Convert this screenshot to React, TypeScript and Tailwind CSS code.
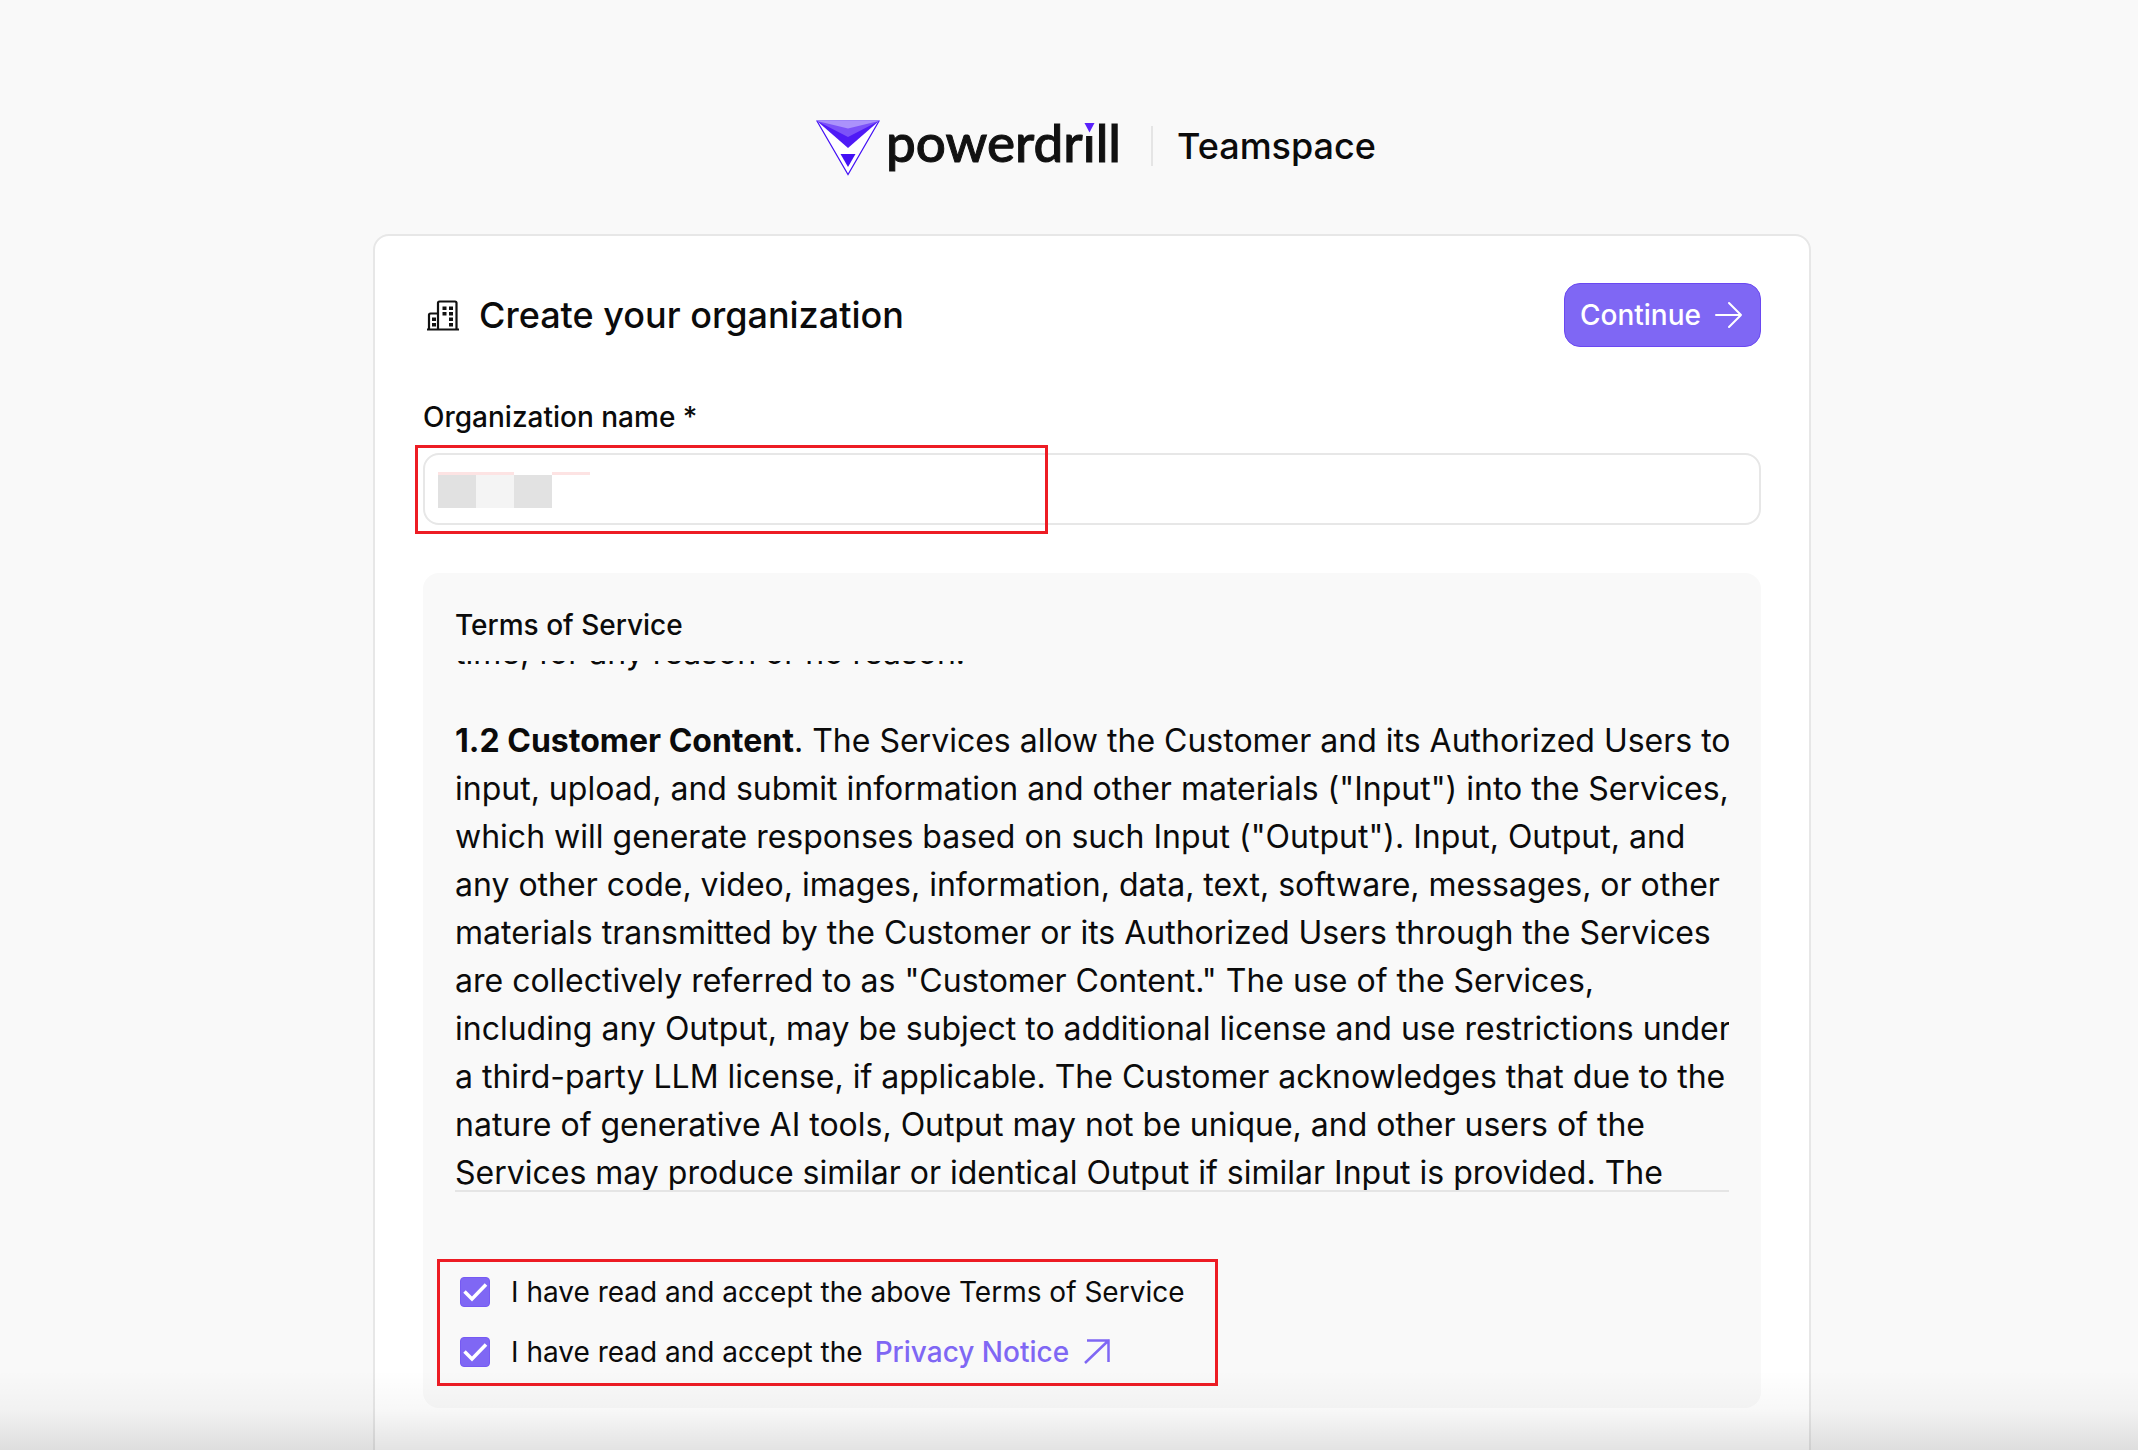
import React, { useEffect, useRef } from "react";

function LogoMark() {
  return (
    <svg className="mt-1 h-14 w-16 shrink-0" viewBox="0 0 64 56" aria-hidden="true">
      <path d="M1 1H63L32 54.5Z" fill="#fff" stroke="#4310f5" strokeWidth="1.2" />
      <path d="M1 1H63L32 28Z" fill="#4f1af6" />
      <path d="M1 1H63L32 17Z" fill="#7c52f8" />
      <path d="M1 1H63L32 8.5Z" fill="#ab92fb" />
      <path d="M24.5 34H39.5L32 47Z" fill="#4310f5" />
    </svg>
  );
}

function Wordmark() {
  return (
    <span className="mb-2 font-[Lato,sans-serif] text-[53px] leading-[56px] font-medium text-[#111] [-webkit-text-stroke:1px_#111]">
      powerdr
      <span className="relative">
        i
        <svg className="absolute top-3 left-0 h-[14px] w-[13px] bg-[#f9f9f9]" viewBox="0 0 13 14" aria-hidden="true">
          <path d="M1.500 1H11.500L6.500 10.500Z" fill="#5a22fb" />
        </svg>
      </span>
      ll
    </span>
  );
}

function BuildingIcon() {
  return (
    <svg className="size-9" viewBox="0 0 36 36" fill="none" stroke="#111" strokeWidth="2.2" aria-hidden="true">
      <path d="M2 32.500H34M4 32V18Q4 16.500 5.500 16.500H13M13 32V6Q13 4.500 14.500 4.500H30Q31.500 4.500 31.500 6V32" />
      <path fill="#111" stroke="none" d="M17.500 9.500h4v3.500h-4zM24 9.500h4v3.500h-4zM17.500 15h4v3.500h-4zM24 15h4v3.500h-4zM24 20.500h4v3.500h-4zM24 26h4v3.500h-4zM7 20.500h4v3.500h-4zM7 26h4v3.500h-4z" />
    </svg>
  );
}

function Consent({ id, children }: { id: string; children: React.ReactNode }) {
  return (
    <div className="flex h-[60px] items-center gap-[21px]">
      <span className="relative flex size-[30px]">
        <input id={id} type="checkbox" defaultChecked className="peer size-[30px] appearance-none rounded-sm border border-[#765af3] bg-[#7f67f4]" />
        <svg className="pointer-events-none absolute inset-0 hidden peer-checked:block" viewBox="0 0 30 30" fill="none" stroke="#fff" strokeWidth="3.5" aria-hidden="true">
          <path d="M4.500 14.500L12 22L26 7.500" />
        </svg>
      </span>
      {children}
    </div>
  );
}

export default function App() {
  const terms = useRef<HTMLDivElement>(null);
  useEffect(() => {
    if (terms.current) terms.current.scrollTop = 32;
  }, []);

  return (
    <div className="relative h-screen overflow-hidden bg-[#f9f9f9] pl-[46px] font-[Inter,sans-serif] text-[28px] leading-10 text-[#0b0b0b]">
      <header className="flex h-[174px] items-end justify-center pl-2">
        <div className="flex h-14 items-center gap-1.5">
          <LogoMark />
          <Wordmark />
          <span className="mr-[18px] ml-6 h-10 w-0.5 bg-[#e5e5e5]" />
          <span className="text-4xl font-medium">Teamspace</span>
        </div>
      </header>

      <main className="mx-auto mt-[60px] w-full max-w-[1438px] rounded-2xl border-2 border-[#e7e7e7] bg-white px-12 pt-[47px] pb-32">
        <div className="flex items-center justify-between">
          <h1 className="flex items-center gap-[18px] pl-0.5 text-4xl font-medium">
            <BuildingIcon />
            Create your organization
          </h1>
          <button type="button" className="flex h-16 items-center gap-3 rounded-2xl border border-[#6a48f1] bg-[#7f67f4] px-[15px] font-medium text-white">
            Continue
            <svg className="size-8" viewBox="0 0 32 32" fill="none" stroke="currentColor" strokeWidth="2" strokeLinecap="round" strokeLinejoin="round" aria-hidden="true">
              <path d="M3 16H28M16 4L28 16L16 28" />
            </svg>
          </button>
        </div>

        <label htmlFor="org" className="mt-[50px] block font-medium">Organization name *</label>
        <div className="relative mt-4">
          <input id="org" type="text" className="block h-[72px] w-full rounded-2xl border-2 border-[#e7e7e7] bg-white px-4" />
          <div className="pointer-events-none absolute top-[19px] left-[15px] grid grid-cols-[38px_38px_38px_38px]" aria-hidden="true">
            <span className="h-9 border-t-[3px] border-[#fde3e3] bg-[#e1e1e1]" />
            <span className="h-9 border-t-[3px] border-[#fde3e3] bg-[#f4f4f4]" />
            <span className="mt-[3px] h-[33px] bg-[#e2e2e2]" />
            <span className="h-[3px] bg-[#fde3e3]" />
          </div>
          <div className="pointer-events-none absolute -top-2 -left-2 h-[89px] w-[633px] border-3 border-[#ed1c24]" />
        </div>

        <section className="mt-12 rounded-2xl bg-[#f9f9f9] px-8 pt-8 pb-[26px]">
          <h2 className="font-medium">Terms of Service</h2>
          <div ref={terms} className="mt-4 h-[531px] overflow-hidden border-b-2 border-[#e5e5e5] text-[32px] leading-[48px]">
            <p>time, for any reason or no reason.</p>
            <p className="-mr-1 mt-10">
              <strong className="font-bold">1.2 Customer Content</strong>. The Services allow the Customer and its Authorized Users to input, upload, and submit information and other materials ("Input") into the Services, which will generate responses based on such Input ("Output"). Input, Output, and any other code, video, images, information, data, text, software, messages, or other materials transmitted by the Customer or its Authorized Users through the Services are collectively referred to as "Customer Content." The use of the Services, including any Output, may be subject to additional license and use restrictions under a third-party LLM license, if applicable. The Customer acknowledges that due to the nature of generative AI tools, Output may not be unique, and other users of the Services may produce similar or identical Output if similar Input is provided. The
            </p>
          </div>
          <div className="relative mt-[70px] pl-[5px]">
            <Consent id="tos">
              <label htmlFor="tos">I have read and accept the above Terms of Service</label>
            </Consent>
            <Consent id="privacy">
              <span className="flex items-center gap-3">
                <label htmlFor="privacy">I have read and accept the</label>
                <a href="#privacy-notice" className="flex items-center gap-3 font-medium text-[#7f67f4]">
                  Privacy Notice
                  <svg className="size-8" viewBox="0 0 32 32" fill="none" stroke="currentColor" strokeWidth="2.5" aria-hidden="true">
                    <path d="M4 27L28 4M6 4.500H27.500V26" />
                  </svg>
                </a>
              </span>
            </Consent>
            <div className="pointer-events-none absolute -top-[3px] -left-[18px] h-[127px] w-[781px] border-3 border-[#ed1c24]" />
          </div>
        </section>
      </main>

      <div className="pointer-events-none absolute inset-x-0 bottom-0 h-20 bg-linear-to-b from-transparent via-black/3 to-black/11" />
    </div>
  );
}
